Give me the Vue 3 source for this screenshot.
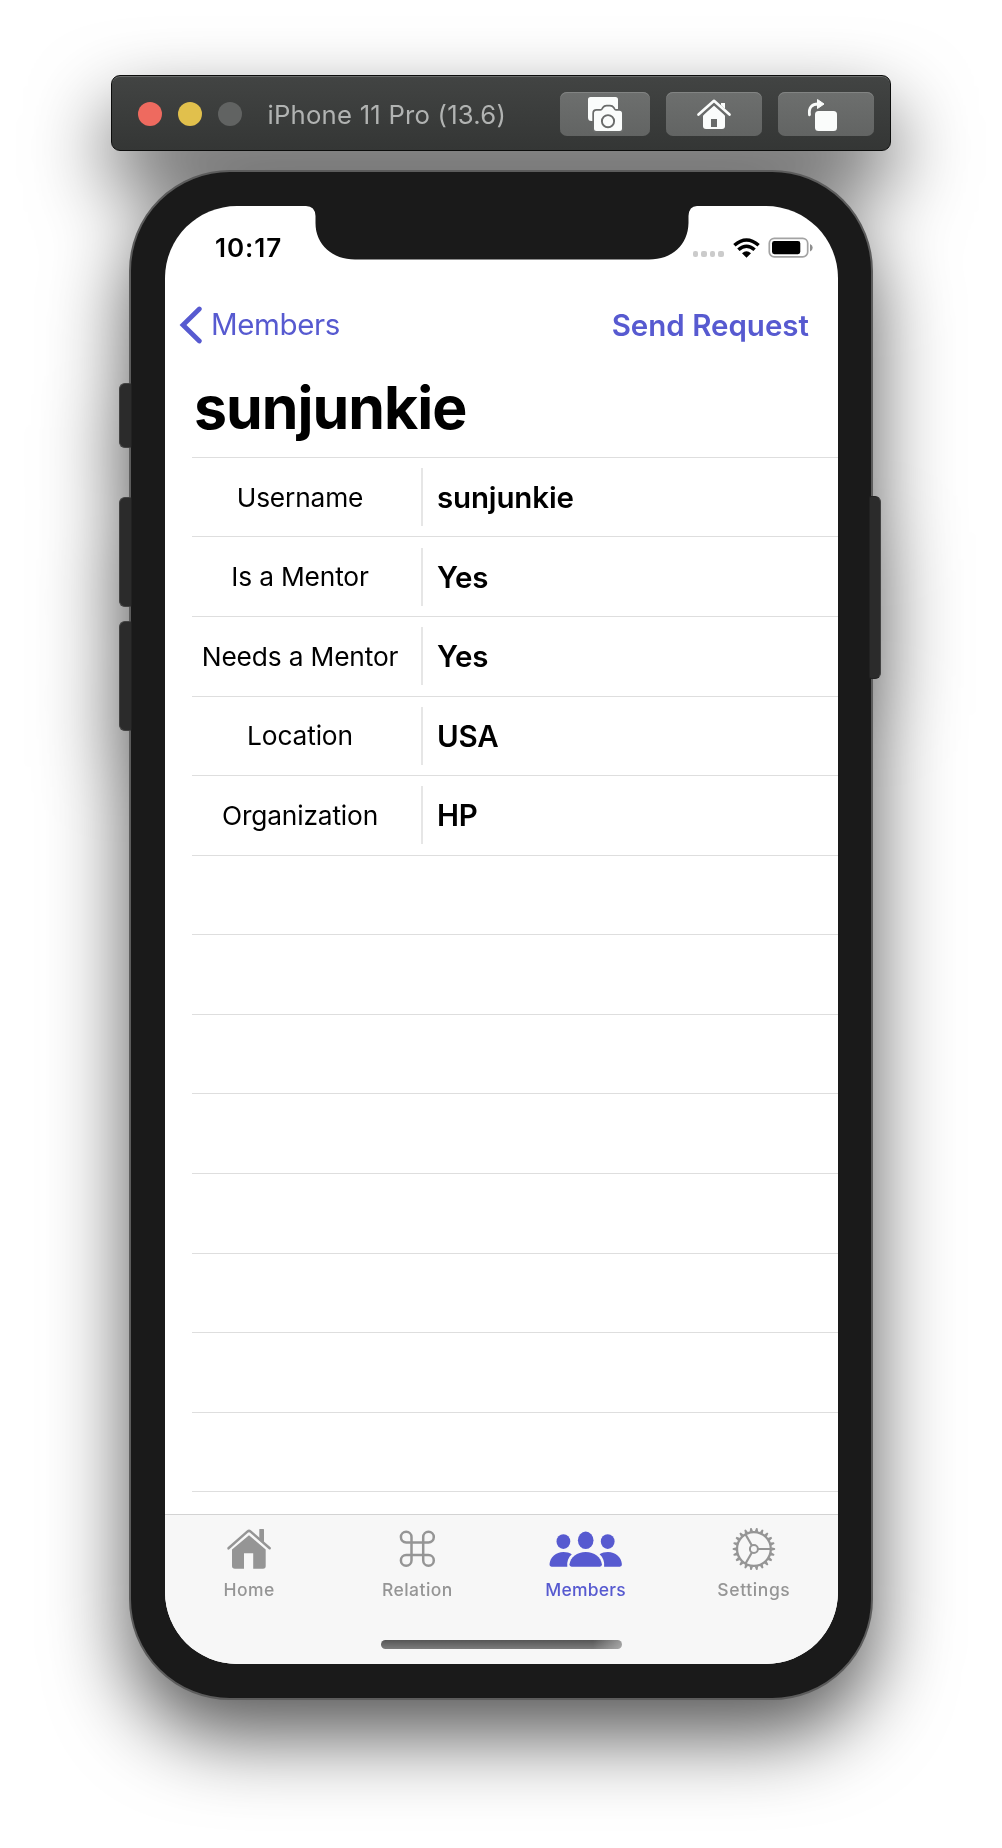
<script setup>
const fields = [
  { label: 'Username', value: 'sunjunkie' },
  { label: 'Is a Mentor', value: 'Yes' },
  { label: 'Needs a Mentor', value: 'Yes' },
  { label: 'Location', value: 'USA' },
  { label: 'Organization', value: 'HP' },
]
const emptyRows = 9
const teeth = Array.from({ length: 22 }, (_, i) => (i * 360) / 22)
</script>

<template>
  <main class="stage">
    <div class="toolbar">
      <span class="light red"></span>
      <span class="light yellow"></span>
      <span class="light grey"></span>
      <span class="device">iPhone 11 Pro (13.6)</span>
      <div class="tools">
        <button class="tool narrow">
          <svg width="90" height="44" viewBox="0 0 90 44">
            <path d="M30.5 5H55.5Q58 5 58 7.500V25H34V29H31.500Q28 29 28 25.500V7.500Q28 5 30.500 5Z" fill="#fafcfb" />
            <path d="M36.500 18.800H40.500Q42 18.800 43 17L43.600 16Q44.600 14.500 46.500 14.500H50Q52 14.500 53 16L53.600 17Q54.500 18.800 56 18.800H59.500Q62 18.800 62 21.300V36.500Q62 39 59.500 39H36.500Q34 39 34 36.500V21.300Q34 18.800 36.500 18.800Z" fill="#fafcfb" stroke="#696b6a" stroke-width="3.400" paint-order="stroke" />
            <circle cx="48" cy="29.200" r="6.100" fill="none" stroke="#696b6a" stroke-width="1.900" />
          </svg>
        </button>
        <button class="tool">
          <svg width="96" height="44" viewBox="0 0 96 44">
            <path d="M55 11H59V20L55 16Z" fill="#fafcfb" />
            <path d="M37 23.500L48 12.500L59 23.500V34Q59 37 56 37H40Q37 37 37 34Z" fill="#fafcfb" />
            <path d="M32.500 22.500L48 8.800L63.500 22.500" fill="none" stroke="#696b6a" stroke-width="5" transform="translate(0 1.500)" />
            <path d="M32.500 22.500L48 8.800L63.500 22.500" fill="none" stroke="#fafcfb" stroke-width="2.700" stroke-linecap="round" stroke-linejoin="round" />
            <rect x="45" y="27" width="6" height="8" fill="#696b6a" />
          </svg>
        </button>
        <button class="tool">
          <svg width="96" height="44" viewBox="0 0 96 44">
            <path d="M31.500 22.800C30.500 15.500 34 12 40 12" fill="none" stroke="#fafcfb" stroke-width="2.800" stroke-linecap="round" />
            <path d="M39.500 7.500L46 12L39.500 16.500Z" fill="#fafcfb" stroke="#fafcfb" stroke-linejoin="round" />
            <rect x="37" y="19" width="22" height="20" rx="3.500" fill="#fafcfb" />
          </svg>
        </button>
      </div>
    </div>

    <div class="phone">
      <i class="key mute"></i>
      <i class="key up"></i>
      <i class="key down"></i>
      <i class="key power"></i>
      <div class="screen">
        <svg class="notch" width="391" height="55" viewBox="0 0 391 55">
          <path d="M0 0H391V1Q383 1 382.500 11V18C382 40 366 54.500 343 54.500H49C27 54.500 9.500 40 9.500 18V11Q9 1 0 1Z" fill="#1a1a1a" />
        </svg>

        <div class="status">
          <span class="time">10:17</span>
          <div class="indicators">
            <div class="dots"><i v-for="n in 4" :key="n"></i></div>
            <svg class="wifi" width="27" height="20" viewBox="0 0 27 20">
              <g fill="none" stroke="#000" stroke-width="3.500">
                <path d="M1.400 7.300Q13.500 -3.400 25.600 7.300" />
                <path d="M5.400 11.800Q13.500 4.600 21.600 11.800" />
              </g>
              <path d="M9 15.300Q13.500 11.400 18 15.300L13.500 19.800Z" />
            </svg>
            <svg width="45" height="22" viewBox="0 0 45 22">
              <rect x="1.300" y="1.300" width="38.400" height="18.600" rx="5" fill="none" stroke="#a3a3a3" stroke-width="1.700" />
              <rect x="4" y="4" width="28.300" height="13.200" rx="2.400" />
              <path d="M42 7Q44.700 8 44.700 10.700T42 14.500Z" fill="#8e8e8e" />
            </svg>
          </div>
        </div>

        <nav class="nav">
          <a class="back">
            <svg width="24" height="38" viewBox="0 0 24 38"><path d="M20.300 3L4 19L20.300 35" fill="none" stroke="#575ad0" stroke-width="4.800" stroke-linecap="round" stroke-linejoin="miter" /></svg>
            <span>Members</span>
          </a>
          <a class="send">Send Request</a>
        </nav>

        <h1 class="title">sunjunkie</h1>

        <div class="list">
          <div v-for="f in fields" :key="f.label" class="row">
            <span class="label">{{ f.label }}</span>
            <span class="rule"></span>
            <span class="value">{{ f.value }}</span>
          </div>
          <div v-for="n in emptyRows" :key="n" class="row"></div>
        </div>

        <div class="tabbar">
          <div class="tabs">
            <div class="tab">
              <svg width="76" height="48" viewBox="0 0 76 48" fill="#959595">
                <path d="M48.300 5.600Q48.300 5 49 5H52.300Q53 5 53 5.600V20L48.300 16Z" />
                <path d="M17.500 24.300L36.600 7.400Q38 6.300 39.400 7.400L58.700 24.300" fill="none" stroke="#959595" stroke-width="2.500" stroke-linecap="round" />
                <path d="M21 25.500L38 11.300L54.700 25.500V42Q54.700 44.800 52 44.800H42.200V29.300H33V44.800H24Q21 44.800 21 42Z" />
              </svg>
              <span class="t-home">Home</span>
            </div>
            <div class="tab">
              <svg width="76" height="48" viewBox="0 0 76 48" fill="none" stroke="#959595" stroke-width="2.500">
                <path d="M32.500 18.400V13.100a5.300 5.300 0 1 0-5.300 5.300H49.500a5.300 5.300 0 1 0-5.300-5.300V36.400a5.300 5.300 0 1 0 5.300-5.300H27.200a5.300 5.300 0 1 0 5.300 5.300Z" />
              </svg>
              <span class="t-relation">Relation</span>
            </div>
            <div class="tab active">
              <svg width="76" height="48" viewBox="0 0 76 48" fill="#575ad0">
                <ellipse cx="15.400" cy="17.600" rx="6.900" ry="7.400" />
                <ellipse cx="59.700" cy="17.600" rx="6.900" ry="7.400" />
                <ellipse cx="37.700" cy="16.300" rx="7.800" ry="8.700" />
                <path d="M23.600 42.700Q21.300 42.700 21.500 40.300C22.500 33 29 28 37.700 28S52.900 33 53.900 40.300Q54.100 42.700 51.800 42.700Z" />
                <path d="M3.600 42.700Q1.300 42.700 1.500 40.300C2 33 8 28 15.500 28C18.500 28 21.600 28.800 23.800 30.300C20.300 33.500 18.700 37.500 19.300 42.700Z" />
                <path d="M71.800 42.700Q74.100 42.700 73.900 40.300C73.400 33 67.400 28 59.900 28C56.900 28 53.800 28.800 51.600 30.300C55.100 33.500 56.700 37.500 56.100 42.700Z" />
              </svg>
              <span class="t-members">Members</span>
            </div>
            <div class="tab">
              <svg width="76" height="48" viewBox="0 0 76 48" fill="none" stroke="#959595">
                <g transform="translate(37.900 25)">
                  <circle r="16.900" stroke-width="2.300" />
                  <circle r="4" stroke-width="2" />
                  <path v-for="a in [0, 120, 240]" :key="a" d="M4 0H17" stroke-width="2.200" :transform="`rotate(${a})`" />
                  <path v-for="a in teeth" :key="'t' + a" d="M17.500 -1.700L21.200 -.8V.8L17.500 1.700Z" fill="#959595" stroke="none" :transform="`rotate(${a})`" />
                </g>
              </svg>
              <span class="t-settings">Settings</span>
            </div>
          </div>
          <div class="home-bar"></div>
        </div>
      </div>
    </div>
  </main>
</template>

<style>
body { margin: 0; background: #fff; }
</style>

<style scoped>
.stage {
  box-sizing: border-box;
  width: 1002px;
  height: 1848px;
  padding-top: 75px;
  display: flex;
  flex-direction: column;
  align-items: center;
  gap: 19px;
  overflow: hidden;
  font-family: Inter, "Liberation Sans", sans-serif;
  color: #000;
  filter: drop-shadow(0 36px 40px rgba(0, 0, 0, .66));
}
.toolbar {
  box-sizing: border-box;
  width: 780px;
  height: 76px;
  display: flex;
  align-items: center;
  gap: 16px;
  padding: 0 16px 0 26px;
  border: 1px solid #0c0d0c;
  border-radius: 9px;
  background: linear-gradient(#424443, #343635);
  box-shadow: inset 0 1px 0 #6a6c6b;
}
.light { width: 24px; height: 24px; border-radius: 50%; margin-top: 2px; }
.red { background: #ee6a5f; }
.yellow { background: #e1c04c; }
.grey { background: #616362; }
.device { margin: 3px 0 0 9.5px; font-size: 25.7px; line-height: 30px; letter-spacing: .22px; color: #b1b3b2; white-space: nowrap; }
.tools { display: flex; gap: 16px; margin: 2px 0 0 auto; }
.tool {
  width: 96px;
  height: 44px;
  padding: 0;
  border: 0;
  border-radius: 7px;
  background: linear-gradient(#6d6f6e, #626463);
  box-shadow: inset 0 1px 0 #828483;
}
.tool.narrow { width: 90px; }
.tool svg { display: block; }

.phone {
  position: relative;
  box-sizing: border-box;
  flex: none;
  width: 744px;
  height: 1530px;
  padding: 34px 33px 34px 34px;
  border: 2px solid #5c5c5c;
  border-radius: 101px;
  background: #1a1a1a;
}
.key {
  position: absolute;
  box-sizing: border-box;
  left: -12px;
  width: 13px;
  background: #2b2b2b;
  border: 1px solid #424242;
  border-right-color: #222;
  border-radius: 6px 2px 2px 6px;
}
.mute { top: 211px; height: 65px; }
.up { top: 325px; height: 110px; }
.down { top: 449px; height: 110px; }
.power { left: auto; right: -10px; top: 324px; width: 12px; height: 183px; border-color: #222 #424242 #222 #222; border-radius: 2px 6px 6px 2px; }

.screen {
  position: relative;
  display: flex;
  flex-direction: column;
  width: 673px;
  height: 1458px;
  border-radius: 72px;
  overflow: hidden;
  background: #fff;
}
.notch { position: absolute; top: -1px; left: 141px; }
.status {
  display: flex;
  justify-content: space-between;
  align-items: center;
  height: 83px;
  flex: none;
  padding: 0 25px 0 50px;
}
.time { font-size: 26px; font-weight: 600; letter-spacing: .95px; }
.indicators { display: flex; align-items: center; }
.dots { display: flex; gap: 3px; margin: 13px 9px 0 0; }
.dots i { width: 5.5px; height: 5.5px; border-radius: 2px; background: #cbcbcb; }
.wifi { margin-right: 8.5px; }

.nav {
  display: flex;
  justify-content: space-between;
  align-items: center;
  height: 71px;
  flex: none;
  padding: 0 29px 0 14px;
  color: #575ad0;
  font-size: 29.5px;
}
.back { display: flex; align-items: center; gap: 8px; letter-spacing: -.4px; }
.back span { margin-top: -2px; }
.send { font-weight: 600; }
.title { margin: 0 0 1.9px 29px; height: 95px; line-height: 95px; font-size: 59px; font-weight: 700; letter-spacing: -1px; flex: none; }

.list { flex: none; height: 1057.1px; margin-left: 27px; overflow: hidden; }
.row {
  box-sizing: border-box;
  display: flex;
  align-items: center;
  height: 79.57px;
  border-top: 1px solid #dedede;
}
.label { width: 216px; margin-right: 13px; text-align: center; font-size: 26.3px; letter-spacing: -.15px; white-space: nowrap; }
.rule { width: 2px; height: 58px; background: #e6e6e6; }
.value { margin-left: 14px; font-size: 29.5px; font-weight: 600; letter-spacing: -.15px; }

.tabbar {
  box-sizing: border-box;
  flex: 1;
  display: flex;
  flex-direction: column;
  align-items: center;
  justify-content: space-between;
  padding: 9px 0 15px;
  border-top: 1px solid #d3d3d3;
  background: #f7f7f7;
}
.tabs { display: flex; width: 100%; }
.tab {
  flex: 1;
  display: flex;
  flex-direction: column;
  align-items: center;
  gap: 7px;
  font-size: 17.5px;
  line-height: 22px;
  font-weight: 500;
  color: #959595;
}
.tab.active { color: #575ad0; }
.tab svg { display: block; }
.t-home { letter-spacing: .5px; }
.t-relation { letter-spacing: .45px; }
.t-members { letter-spacing: .25px; }
.t-settings { letter-spacing: .6px; }
.home-bar {
  width: 241px;
  height: 9px;
  border-radius: 5px;
  background: linear-gradient(90deg, transparent 88%, rgba(200, 200, 200, .6)), linear-gradient(#555, #7b7b7b);
}
</style>
